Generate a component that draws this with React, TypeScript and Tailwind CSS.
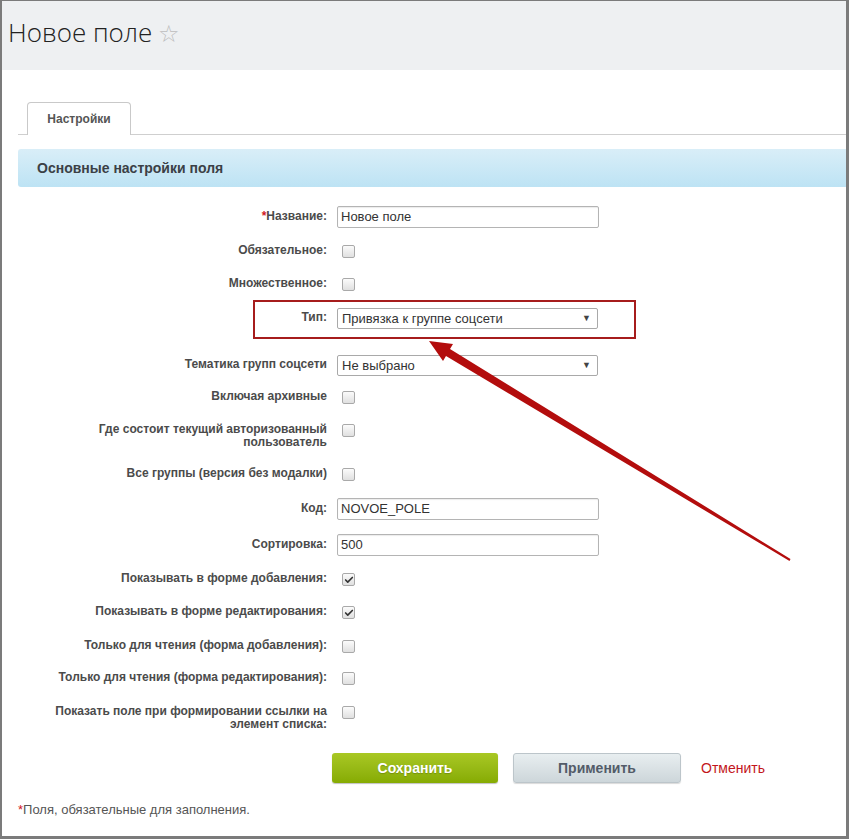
import { Check } from 'lucide-react'

type Row = {
  label: React.ReactNode
  kind: 'input' | 'select' | 'check'
  value?: string
  checked?: boolean
  required?: boolean
  h: string
}

const ROWS: Row[] = [
  { label: 'Название:', kind: 'input', value: 'Новое поле', required: true, h: 'h-[34px]' },
  { label: 'Обязательное:', kind: 'check', h: 'h-[33px]' },
  { label: 'Множественное:', kind: 'check', h: 'h-[34px]' },
  { label: 'Тип:', kind: 'select', value: 'Привязка к группе соцсети', h: 'h-[47px]' },
  { label: 'Тематика групп соцсети', kind: 'select', value: 'Не выбрано', h: 'h-[32px]' },
  { label: 'Включая архивные', kind: 'check', h: 'h-[33px]' },
  {
    label: (
      <>
        Где состоит текущий авторизованный
        <br />
        пользователь
      </>
    ),
    kind: 'check',
    h: 'h-[44px]',
  },
  { label: 'Все группы (версия без модалки)', kind: 'check', h: 'h-[35px]' },
  { label: 'Код:', kind: 'input', value: 'NOVOE_POLE', h: 'h-[36px]' },
  { label: 'Сортировка:', kind: 'input', value: '500', h: 'h-[34px]' },
  { label: 'Показывать в форме добавления:', kind: 'check', checked: true, h: 'h-[33px]' },
  { label: 'Показывать в форме редактирования:', kind: 'check', checked: true, h: 'h-[34px]' },
  { label: 'Только для чтения (форма добавления):', kind: 'check', h: 'h-[32px]' },
  { label: 'Только для чтения (форма редактирования):', kind: 'check', h: 'h-[34px]' },
  {
    label: (
      <>
        Показать поле при формировании ссылки на
        <br />
        элемент списка:
      </>
    ),
    kind: 'check',
    h: 'h-[39px]',
  },
]

function Control({ row }: { row: Row }) {
  if (row.kind === 'input') {
    return (
      <div className="mt-[6px] flex h-[22px] w-[262px] items-center rounded-[2px] border border-[#b4b4b4] bg-white pl-[3px] text-[13px] text-[#333] shadow-[inset_0_1px_1px_rgba(0,0,0,0.08)]">
        {row.value}
      </div>
    )
  }

  if (row.kind === 'select') {
    return (
      <div className="mt-[7px] flex h-[21px] w-[261px] items-center justify-between rounded-[2px] border border-[#a9a9a9] bg-white pl-[4px] pr-[6px] text-[13px] text-[#333]">
        <span>{row.value}</span>
        <span className="text-[9px] text-[#444]">▼</span>
      </div>
    )
  }

  return (
    <div className="ml-[5px] mt-[11px] flex h-[13px] w-[13px] items-center justify-center rounded-[2px] border border-[#a9a9a9] bg-gradient-to-b from-[#fbfbfb] to-[#e0e0e0]">
      {row.checked ? <Check className="h-[10px] w-[10px] text-[#333]" strokeWidth={4} /> : null}
    </div>
  )
}

export default function App() {
  return (
    <div className="relative h-[839px] w-[849px] border-b-[3px] border-l-2 border-r-[3px] border-t border-[#7b7b7b] bg-white font-['Liberation_Sans',Arial,sans-serif]">
      <header className="h-[69px] bg-[#eef0f2] pl-[6px] pt-[18px]">
        <h1 className="flex items-baseline font-['Open_Sans',sans-serif] text-[26px] font-light leading-[26px] text-[#222]">
          Новое поле
          <span className="ml-[6px] text-[24px] text-[#bdbdbd]">☆</span>
        </h1>
      </header>

      <div className="pl-[16px]">
        <div className="mt-[32px] flex border-b border-[#cfcfcf]">
          <div className="-mb-px ml-[9px] flex h-[33px] w-[104px] items-center justify-center rounded-t-[4px] border border-b-0 border-[#c9c9c9] bg-white text-[12px] font-bold text-[#555]">
            Настройки
          </div>
        </div>

        <div className="mt-[14px] flex h-[38px] items-center rounded-l-[3px] bg-gradient-to-b from-[#d9eef8] to-[#bde3f4] pl-[19px] text-[14px] font-bold text-[#3b4046]">
          Основные настройки поля
        </div>

        <div className="mt-[13px] flex flex-col">
          {ROWS.map((row, i) => (
            <div key={i} className={`flex ${row.h}`}>
              <div className="w-[309px] pt-[10px] text-right text-[12px] font-bold leading-[13px] text-[#4b4b4b]">
                {row.required ? <span className="text-[#d0191f]">*</span> : null}
                {row.label}
              </div>
              <div className="ml-[10px]">
                <Control row={row} />
              </div>
            </div>
          ))}
        </div>

        <div className="mt-[19px] flex items-center pl-[314px]">
          <button
            type="button"
            className="h-[30px] w-[166px] rounded-[3px] bg-gradient-to-b from-[#a9c823] to-[#86ab02] text-[14px] font-bold text-white shadow-[0_1px_1px_rgba(0,0,0,0.25)] [text-shadow:0_1px_1px_rgba(0,0,0,0.2)]"
          >
            Сохранить
          </button>
          <button
            type="button"
            className="ml-[15px] h-[30px] w-[168px] rounded-[3px] border border-[#bcc5ca] bg-gradient-to-b from-[#e8eef0] to-[#cdd6da] text-[14px] font-bold text-[#535c69] shadow-[0_1px_1px_rgba(0,0,0,0.15)]"
          >
            Применить
          </button>
          <span className="ml-[20px] text-[14px] text-[#c3161c]">Отменить</span>
        </div>

        <p className="mt-[17px] text-[13px] text-[#555]">
          <span className="text-[#d0191f]">*</span>Поля, обязательные для заполнения.
        </p>
      </div>

      {/* annotation: red frame around the type row and the arrow */}
      <div className="pointer-events-none absolute left-[251px] top-[299px] h-[39px] w-[383px] border-2 border-[#a61c1c]" />
      <svg className="pointer-events-none absolute left-[-2px] top-[-1px]" width="849" height="839">
        <polygon
          points="429,341 453,344 450,349 790.5,559 789.5,561 446,356 443,361"
          fill="#b30d0d"
        />
      </svg>
    </div>
  )
}
